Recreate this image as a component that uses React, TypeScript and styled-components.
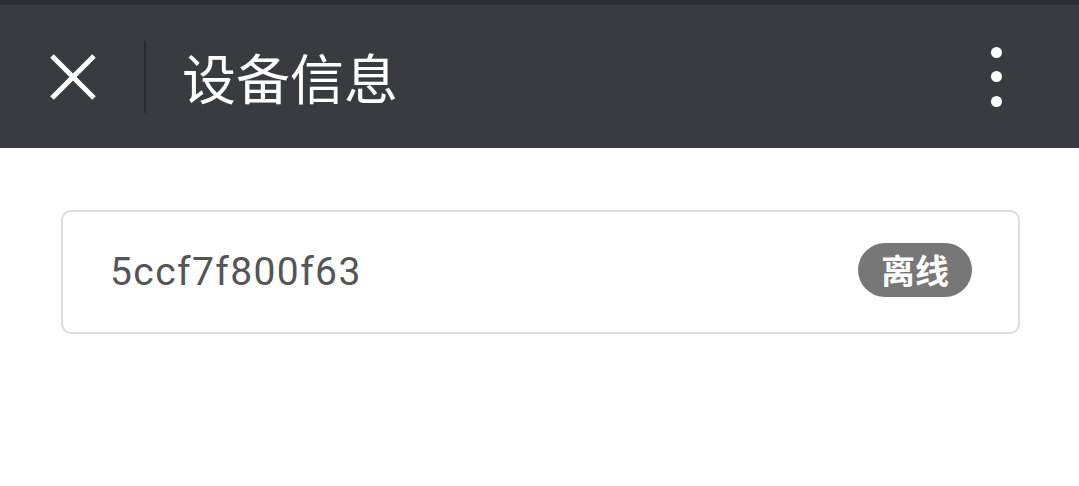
import React, { FC } from 'react';
import styled, { createGlobalStyle } from 'styled-components';

const GlobalStyle = createGlobalStyle`
  html, body {
    margin: 0;
    padding: 0;
    background: #ffffff;
    font-family: Roboto, "Noto Sans CJK SC", sans-serif;
  }
`;

const StatusStrip = styled.div`
  height: 5px;
  background: #2c2d31;
`;

const Header = styled.header`
  height: 143px;
  background: #3a3b40;
  display: flex;
  align-items: center;
  padding: 0 0 0 48px;
`;

const CloseButton = styled.div`
  width: 50px;
  height: 50px;
  display: flex;
  align-items: center;
  justify-content: center;
  margin-top: 1px;
`;

const Divider = styled.div`
  width: 2px;
  height: 72px;
  background: #2a2b2e;
  margin: 0 36px 0 46px;
`;

const Title = styled.h1`
  flex: 1;
  margin: 0;
  color: #ffffff;
  font-family: "Noto Sans CJK SC", sans-serif;
  font-weight: 400;
  font-size: 54px;
  line-height: 1;
`;

const MoreButton = styled.div`
  width: 20px;
  height: 60px;
  display: flex;
  flex-direction: column;
  justify-content: space-between;
  align-items: center;
  margin-right: 73px;
`;

const Dot = styled.span`
  width: 11px;
  height: 11px;
  border-radius: 50%;
  background: #ffffff;
`;

const Content = styled.main`
  padding: 62px 59px 0 61px;
`;

const DeviceCard = styled.div`
  border: 2px solid #dddddd;
  border-radius: 10px;
  box-sizing: border-box;
  height: 124px;
  display: flex;
  align-items: center;
  justify-content: space-between;
  padding: 0 46px 0 47px;
`;

const DeviceId = styled.span`
  font-family: Roboto, sans-serif;
  font-size: 39px;
  letter-spacing: 1.4px;
  color: #555555;
  margin-top: -1px;
`;

const Badge = styled.span<{ $color: string }>`
  background: ${p => p.$color};
  color: #ffffff;
  font-family: "Noto Sans CJK SC", sans-serif;
  font-weight: 700;
  font-size: 34px;
  line-height: 54px;
  height: 54px;
  padding: 0 23px;
  border-radius: 27px;
  margin-top: -4px;
`;

const App: FC = () => {
  return (
    <>
      <GlobalStyle />
      <StatusStrip />
      <Header>
        <CloseButton>
          <svg width="48" height="48" viewBox="0 0 48 48">
            <path d="M3 3 L45 45 M45 3 L3 45" stroke="#ffffff" strokeWidth="5" />
          </svg>
        </CloseButton>
        <Divider />
        <Title>设备信息</Title>
        <MoreButton>
          <Dot />
          <Dot />
          <Dot />
        </MoreButton>
      </Header>
      <Content>
        <DeviceCard>
          <DeviceId>5ccf7f800f63</DeviceId>
          <Badge $color="#777777">离线</Badge>
        </DeviceCard>
      </Content>
    </>
  );
};

export default App;
